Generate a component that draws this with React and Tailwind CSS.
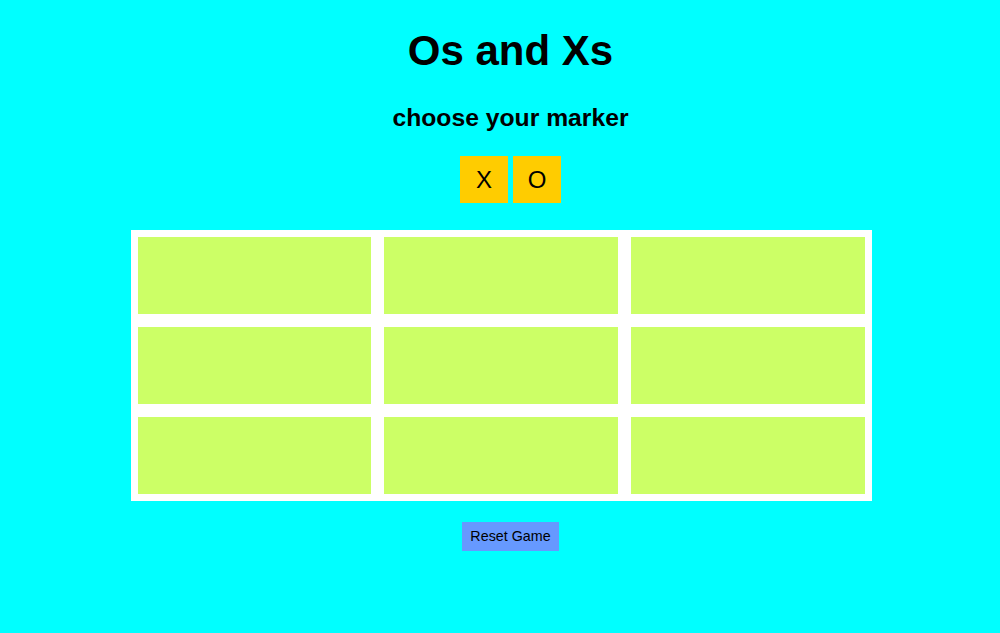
import React from 'react';

const cells = Array.from({ length: 9 }, (_, i) => i);

export default function App() {
  return (
    <div
      className="min-h-[633px] w-full bg-[#00ffff] flex flex-col items-center text-black"
      style={{ fontFamily: '"Liberation Sans", Arial, sans-serif' }}
    >
      <h1 className="mt-[26px] ml-[21px] text-[42px] font-bold leading-[50px]">Os and Xs</h1>
      <h2 className="mt-[28px] ml-[21px] text-[24.7px] font-bold leading-[28px]">choose your marker</h2>

      <div className="mt-[24px] ml-[21px] flex gap-[5px]">
        <button className="w-[48px] h-[47px] bg-[#ffcc00] text-[24px]">X</button>
        <button className="w-[48px] h-[47px] bg-[#ffcc00] text-[24px]">O</button>
      </div>

      {/* board */}
      <div className="mt-[27px] ml-[2px] w-[741px] bg-white p-[7px] grid grid-cols-3 gap-[13px]">
        {cells.map((i) => (
          <div key={i} className="h-[77px] bg-[#ccff66]" />
        ))}
      </div>

      <button className="mt-[21px] ml-[21px] h-[29px] px-[8px] bg-[#6699ff] text-[14.3px]">Reset Game</button>
    </div>
  );
}
